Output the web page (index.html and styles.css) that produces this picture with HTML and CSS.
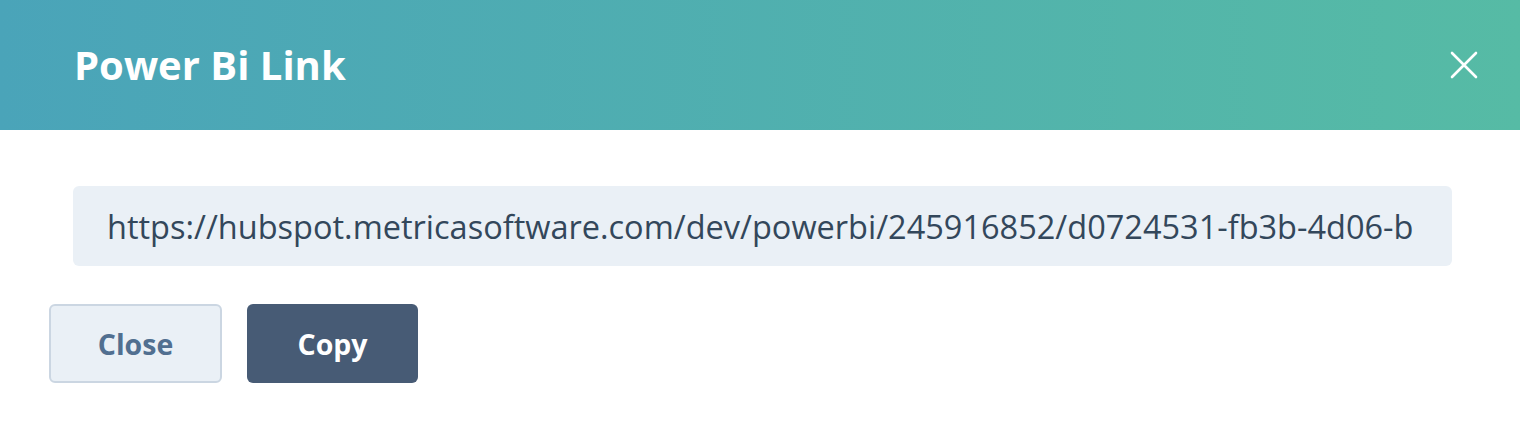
FILE: index.html
```html
<!DOCTYPE html>
<html lang="en">
<head>
    <meta charset="UTF-8">
    <meta name="viewport" content="width=device-width, initial-scale=1.0">
    <title>Power Bi Link</title>
    <link rel="stylesheet" href="styles.css">
</head>
<body>
    <div class="modal">
        <!-- Header -->
        <div class="modal-header">
            <h1>Power Bi Link</h1>
            <button class="close-x" type="button" aria-label="Close">
                <svg width="28" height="28" viewBox="0 0 28 28">
                    <path d="M2 2 L26 26 M26 2 L2 26" stroke="#fff" stroke-width="2.6" stroke-linecap="round" fill="none"/>
                </svg>
            </button>
        </div>

        <!-- Body -->
        <div class="modal-body">
            <input class="link-field" type="text" readonly value="https://hubspot.metricasoftware.com/dev/powerbi/245916852/d0724531-fb3b-4d06-b">
            <div class="actions">
                <button type="button" class="btn btn-secondary">Close</button>
                <button type="button" class="btn btn-primary">Copy</button>
            </div>
        </div>
    </div>
</body>
</html>
```

FILE: styles.css
```css
body {
    margin: 0;
    font-family: "Open Sans", "Noto Sans", sans-serif;
    background-color: #fff;
}
.modal-header {
    height: 130px;
    display: flex;
    align-items: center;
    justify-content: space-between;
    padding: 0 42px 0 74px;
    background: linear-gradient(to right, #4aa4b9, #56bba5);
}
.modal-header h1 {
    margin: 0;
    color: #fff;
    font-size: 40px;
    font-weight: 700;
    padding-bottom: 2px;
}
.close-x {
    background: none;
    border: none;
    padding: 0;
    display: flex;
    cursor: pointer;
}
.modal-body {
    padding: 56px 68px 0 49px;
}
.link-field {
    display: block;
    box-sizing: border-box;
    width: calc(100% - 24px);
    margin-left: 24px;
    height: 80px;
    padding: 0 34px;
    border: none;
    border-radius: 6px;
    background-color: #eaf0f6;
    color: #33475b;
    font-family: "Open Sans", "Noto Sans", sans-serif;
    font-size: 32.5px;
    outline: none;
}
.actions {
    display: flex;
    gap: 25px;
    margin-top: 38px;
}
.btn {
    width: 173px;
    height: 79px;
    border-radius: 6px;
    font-family: "Open Sans", "Noto Sans", sans-serif;
    font-size: 28.5px;
    font-weight: 700;
    cursor: pointer;
}
.btn-secondary {
    background-color: #eaf0f6;
    border: 2px solid #cbd6e2;
    color: #516f90;
}
.btn-primary {
    width: 171px;
    background-color: #475b75;
    border: none;
    color: #fff;
}
```
